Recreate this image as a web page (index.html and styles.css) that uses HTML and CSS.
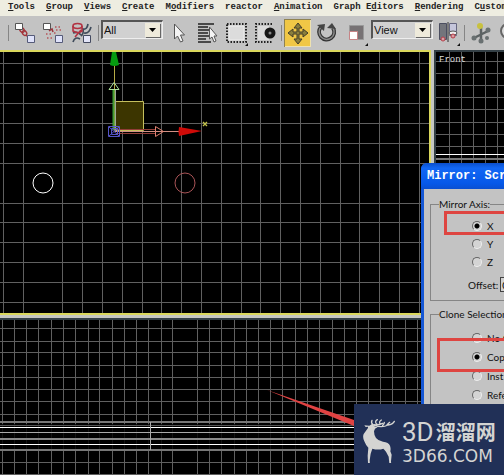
FILE: index.html
```
<!DOCTYPE html>
<html lang="en">
<head>
<meta charset="utf-8">
<title>Mirror tool</title>
<link rel="stylesheet" href="styles.css">
</head>
<body>
<div class="app">
  <nav class="menu">
    <a href="#"><u>T</u>ools</a><a href="#"><u>G</u>roup</a><a href="#"><u>V</u>iews</a><a href="#"><u>C</u>reate</a><a href="#">M<u>o</u>difiers</a><a href="#">reactor</a><a href="#"><u>A</u>nimation</a><a href="#">Graph E<u>d</u>itors</a><a href="#"><u>R</u>endering</a><a href="#">C<u>u</u>stom</a>
  </nav>

  <div class="toolbar">
    <span class="sep"></span>
    <button class="tool" aria-label="Link"><svg width="27" height="28" viewBox="0 0 27 28">
      <g fill="none" stroke="#a3343b" stroke-width="1.3"><ellipse cx="11" cy="11" rx="2" ry="2.6" transform="rotate(-40 11 11)"/><ellipse cx="13.500" cy="14" rx="2" ry="2.600" transform="rotate(-40 13.500 14)"/><path d="M15 16l2 2"/></g>
      <path fill="#fff" stroke="#555" d="M4.500 4.500h7v6h-7z"/><path fill="#dfe2fa" stroke="#555a78" d="M16.500 16.500h7v7h-7z"/></svg></button>
    <button class="tool" aria-label="Unlink"><svg width="27" height="28" viewBox="0 0 27 28">
      <path fill="#fff" stroke="#555" d="M3.500 4.500h7v6h-7z"/><path fill="#dfe2fa" stroke="#555a78" d="M15.500 16.500h7v7h-7z"/>
      <path fill="none" stroke="#9b343b" stroke-width="1.500" d="M9 12l3-2 1 3"/>
      <path stroke="#b5565b" stroke-width="1.500" stroke-dasharray="1.500 2" d="M15 8h5M16 11h5M6 15h6M7 19h5M14 14h2"/></svg></button>
    <button class="tool" aria-label="Bind to space warp"><svg width="27" height="28" viewBox="0 0 27 28">
      <g fill="none" stroke="#3f4b5b" stroke-width="1.700"><path d="M4 14q5-2 8 2M4 23q2-6 7-3M12 17q3-2 2-7q4 1 5-5M15 14q5 1 7-6"/></g>
      <g fill="none" stroke="#b23343" stroke-width="1.600"><ellipse cx="8.500" cy="7" rx="4.500" ry="2.500"/><path d="M4 7v5q5 3 9 0V7M12 11l-6 7"/></g>
      <path fill="#e3e5f8" stroke="#444a60" d="M14.500 16.500h7v7h-7z"/></svg></button>
    <span class="sep"></span>
    <span class="combo"><select aria-label="Selection filter"><option>All</option></select><svg width="15" height="14" viewBox="0 0 15 14"><path d="M4 5h7l-3.500 4z"/></svg></span>
    <button class="tool" aria-label="Select"><svg width="27" height="28" viewBox="0 0 27 28"><path fill="#f4f4f4" stroke="#555" d="M9.500 5v15l3-3 3 6 2.500-1-2.500-6h4z"/></svg></button>
    <button class="tool" aria-label="Select by name"><svg width="27" height="28" viewBox="0 0 27 28">
      <path stroke="#222" stroke-width="1.500" d="M4 5h16M4 8h10M4 11h14M4 14h10M4 17h11M4 20h8M4 23h13"/>
      <path fill="#f4f4f4" stroke="#555" d="M15.500 8v12l2.500-2 2 5 2-1-2-5h3z"/></svg></button>
    <button class="tool" aria-label="Rectangular selection"><svg width="27" height="28" viewBox="0 0 27 28">
      <path fill="#dcdcdc" stroke="#eee" d="M6 7h15v14H6z"/><path fill="none" stroke="#222" stroke-width="2" stroke-dasharray="1.500 1.500" d="M4 5h19v18H4z"/><path fill="#111" d="M25 24v3h-3z"/></svg></button>
    <button class="tool" aria-label="Window crossing"><svg width="27" height="28" viewBox="0 0 27 28">
      <path fill="#dcdcdc" d="M6 7h11v14H6z"/><path fill="none" stroke="#222" stroke-width="2" stroke-dasharray="1.500 1.500" d="M20 5H4v18h16"/><circle cx="18" cy="14" r="5.500" fill="#171717"/><circle cx="18" cy="14" r="1.500" fill="#888"/></svg></button>
    <span class="sep"></span>
    <button class="tool tool-on" aria-label="Move"><svg width="27" height="28" viewBox="0 0 27 28">
      <path fill="#8b7f3c" stroke="#423c28" d="M14 4l4 5h-3v4h4v-3l5 4-5 4v-3h-4v5h3l-4 5-4-5h3v-5H9v3l-5-4 5-4v3h4V9h-3z"/></svg></button>
    <button class="tool" aria-label="Rotate"><svg width="27" height="28" viewBox="0 0 27 28">
      <path fill="none" stroke="#333" stroke-width="4" d="M8 8a7.500 7.500 0 1 0 12 1"/><path fill="none" stroke="#8a8a8a" stroke-width="1.500" d="M8 8a7.500 7.500 0 1 0 12 1"/><path fill="#444" d="M4 6l8-1-1 7zM14 9l5-5 4 6z"/></svg></button>
    <button class="tool" aria-label="Scale"><svg width="27" height="28" viewBox="0 0 27 28">
      <path fill="#777274" stroke="#999" d="M7.500 6.500h14v14h-14z"/><path fill="#fff" stroke="#c78486" d="M7.500 12.500h8v8h-8z"/><path fill="#111" d="M26 24v3h-3z"/></svg></button>
    <span class="combo"><select aria-label="Reference coordinate system"><option>View</option></select><svg width="15" height="14" viewBox="0 0 15 14"><path d="M4 5h7l-3.500 4z"/></svg></span>
    <button class="tool" aria-label="Mirror"><svg width="27" height="28" viewBox="0 0 27 28">
      <path fill="#73757c" stroke="#4b4e60" d="M4.500 4.500h7v16h-7z"/><path fill="#c5c6db" stroke="#65667f" d="M14.500 4.500h7v12h-7z"/>
      <path stroke="#333" d="M13 3v20"/><ellipse cx="18" cy="14" rx="4" ry="2" fill="#eee" stroke="#555"/>
      <g fill="#d9a0a4" stroke="#b63d48"><circle cx="8" cy="20" r="2"/><circle cx="18" cy="17" r="2"/></g><path fill="#111" d="M25 24v3h-3z"/></svg></button>
    <span class="sep"></span>
    <button class="tool" aria-label="Align"><svg width="27" height="28" viewBox="0 0 27 28">
      <path fill="none" stroke="#5c6263" stroke-width="2.500" d="M14 7v15M7 19l14-7"/><g fill="#697071"><circle cx="7" cy="19" r="2.500"/><circle cx="21" cy="11" r="2.500"/><circle cx="14" cy="22" r="2.500"/><circle cx="20" cy="19" r="2"/></g><circle cx="13" cy="7" r="3" fill="#c8c13f"/></svg></button>
    <button class="tool" aria-label="Layers"><svg width="27" height="28" viewBox="0 0 27 28"><circle cx="12" cy="12" r="7" fill="#ddd" stroke="#666" stroke-width="2"/></svg></button>
  </div>

  <main class="views">
    <section class="view view-active">
      <svg class="scene" aria-label="Top viewport">
        <g transform="translate(0 -52)">
          <path class="grid" d="M3.500 0v500M23.500 0v500M62.500 0v500M82.500 0v500M102.500 0v500M122.500 0v500M142.500 0v500M161.500 0v500M181.500 0v500M201.500 0v500M221.500 0v500M241.500 0v500M260.500 0v500M280.500 0v500M300.500 0v500M320.500 0v500M340.500 0v500M359.500 0v500M379.500 0v500M399.500 0v500M419.500 0v500
          M0 63.500h900M0 83.500h900M0 103.500h900M0 123.500h900M0 143.500h900M0 163.500h900M0 203.500h900M0 222.500h900M0 242.500h900M0 262.500h900M0 282.500h900M0 302.500h900"/>
          <circle cx="43" cy="183" r="10" fill="none" stroke="#fff"/>
          <circle cx="185" cy="183" r="10" fill="none" stroke="#a95457"/>
          <path fill="#3c3500" stroke="#c5bf5d" d="M114.500 101.500h29v29h-29z"/>
          <path stroke="#b6aa46" d="M114.500 65v65"/>
          <path stroke="#3e9b35" stroke-width="2" d="M113.500 90v40"/><path stroke="#9a9" d="M115.500 90v40"/>
          <path fill="none" stroke="#aee29b" d="M109 89.500h10l-5-7z"/>
          <path fill="#069b10" d="M112 52h4l3 13q-5 2-9 0z"/>
          <path stroke="#d29084" d="M115 131.500h65"/><path stroke="#913d37" d="M116 129.500h40M116 133.500h40"/>
          <path fill="none" stroke="#df8070" d="M155.500 126.500v10l8-5z"/>
          <path fill="#d00b08" d="M179 127q-1 5 0 9l23-5z"/>
          <path fill="none" stroke="#5555c7" d="M108.500 126.500h11v10h-11zM109 127l10 9M119 127l-10 9M111.500 128.500h6v6h-6z"/>
          <path stroke="#c2c24b" stroke-width="1.300" d="M203 122l4 4M207 122l-4 4"/>
        </g>
      </svg>
    </section>
    <section class="view">
      <span class="view-name">Front</span>
      <svg class="scene" aria-label="Front viewport">
        <g transform="translate(-436 -52)">
          <path class="grid" d="M449.500 0v500M461.500 0v500M473.500 0v500M485.500 0v500M497.500 0v500M436 61.500h500M436 73.500h500M436 85.500h500M436 97.500h500M436 109.500h500M436 122.500h500M436 134.500h500M436 146.500h500"/>
          <path stroke="#fff" d="M436 154.500h500"/><path stroke="#777" stroke-width="2" d="M436 159h500"/>
        </g>
      </svg>
    </section>
    <section class="view">
      <svg class="scene" aria-label="Left viewport">
        <g transform="translate(0 -320)">
          <path class="grid" d="M2.500 0v500M14.500 0v500M26.500 0v500M38.500 0v500M51.500 0v500M63.500 0v500M75.500 0v500M88.500 0v500M99.500 0v500M112.500 0v500M124.500 0v500M136.500 0v500M148.500 0v500M161.500 0v500M172.500 0v500M197.500 0v500M209.500 0v500M221.500 0v500M234.500 0v500M246.500 0v500M258.500 0v500M270.500 0v500M282.500 0v500M295.500 0v500M307.500 0v500M319.500 0v500M332.500 0v500M344.500 0v500M356.500 0v500M368.500 0v500M380.500 0v500M392.500 0v500M405.500 0v500M417.500 0v500
          M0 328.500h900M0 341.500h900M0 352.500h900M0 365.500h900M0 377.500h900M0 389.500h900M0 401.500h900M0 414.500h900M0 462.500h900M0 474.500h900"/>
          <path fill="#000" d="M0 424h900v25H0z" opacity=".8"/>
          <path stroke="#777" stroke-width="2" d="M0 422h900M0 450h900"/>
          <path stroke="#555" d="M0 425.500h900"/>
          <path stroke="#aaa" d="M0 432.500h900"/><path stroke="#888" stroke-width="2" d="M0 439h900"/>
          <path stroke="#fff" d="M0 427.500h900M0 444.500h900"/>
          <path stroke="#aaa" d="M150.500 422v28"/>
          <path fill="#e04343" d="M267 390l87 30 30 10v7l-30-11z"/>
        </g>
      </svg>
    </section>
    <section class="view"></section>
  </main>

  <form class="dialog">
    <h1>Mirror: Scr</h1>
    <div class="dialog-body">
      <fieldset class="axis">
        <legend>Mirror Axis:</legend>
        <label><input type="radio" name="axis" checked>X</label>
        <label><input type="radio" name="axis">Y</label>
        <label><input type="radio" name="axis">Z</label>
        <label class="offset">Offset:<input type="text" value="0"></label>
      </fieldset>
      <fieldset class="clone">
        <legend>Clone Selection</legend>
        <label><input type="radio" name="clone">No C</label>
        <label><input type="radio" name="clone" checked>Cop</label>
        <label><input type="radio" name="clone">Inst</label>
        <label><input type="radio" name="clone">Refe</label>
      </fieldset>
    </div>
    <span class="mark mark-axis"></span>
    <span class="mark mark-clone"></span>
  </form>

  <aside class="brand">
    <svg width="34" height="45" viewBox="55 112 102 135">
      <path fill="#d4d4d2" d="M62 134l15 1 9-6 8 9 8 2-8 4-3 8q0 12 6 20 7 9 21 11 17 2 21 12 3 8 1 17l4 10-2 20 1 12h-8l-1-4 3-2-2-20-8-15q-6-8-8-9-15 5-33 0l-5 15-3 20 1 14h-8l-1-4 3-2-1-22 2-24q-8-8-12-19-6-12-2-22l13-18v-4l-7 1z"/>
      <path fill="none" stroke="#d4d4d2" stroke-width="4" stroke-linecap="round" d="M88 132q-7-6-3-13M91 132q13 2 26-4M100 131q-9-8 1-14M110 130q-6-6 3-12M91 134q25 8 42-1 14-2 19-11M117 134q5-3 5-9M130 132l8-7"/>
    </svg>
    <div class="brand-text">
      <div class="brand-name"><span class="brand-3d">3D</span><span>溜溜网</span></div>
      <div class="brand-site">3D66.COM</div>
    </div>
  </aside>
</div>
</body>
</html>
```
FILE: styles.css
```
* { box-sizing: border-box; }

body {
  margin: 0;
  overflow: hidden;
  font-family: Lato, "Liberation Sans", sans-serif;
  font-size: 10px;
  color: #111;
}

.app {
  position: relative;
  display: flex;
  flex-direction: column;
  height: 100vh;
  overflow: hidden;
  background: #c3c3c3;
}

.menu {
  display: flex;
  gap: 11px;
  padding: 0 8px;
  background: #eeede1;
  font: bold 9px/14px "Liberation Mono", monospace;
  padding-bottom: 2px;
  white-space: nowrap;
}

.menu a { color: #222; text-decoration: none; }

.toolbar {
  display: flex;
  align-items: center;
  gap: 2px;
  height: 34px;
  padding: 0 8px;
  background: #c3c3c3;
}

.toolbar > * { flex: none; }

.sep { width: 1px; height: 16px; background: #858585; }

.tool {
  display: block;
  width: 27px;
  height: 28px;
  padding: 0;
  border: 0;
  background: none;
}

.tool svg { display: block; }
.tool-on { background: #f0c746; box-shadow: inset 1px 1px #8f8250, inset -1px -1px #eee2b0; }

.combo {
  display: flex;
  align-items: center;
  width: 62px;
  height: 19px;
  margin-bottom: 8px;
  padding-right: 2px;
  border: 1px solid #eee;
  border-top: 2px solid #555;
  border-left: 2px solid #555;
  background: #d1d1d1;
}

.combo select {
  flex: 1;
  min-width: 0;
  padding: 0 0 0 1px;
  border: 0;
  appearance: none;
  background: none;
  color: #111;
  font: 11px/14px "Liberation Sans", sans-serif;
}

.combo svg {
  flex: none;
  background: #eeeadb;
  box-shadow: 1px 1px #666;
}

.views {
  flex: 1;
  min-height: 0;
  display: grid;
  grid-template-columns: 431fr 70fr;
  grid-template-rows: 265fr 157fr;
  gap: 3px;
  background: #c6c7c2;
}

.view {
  position: relative;
  min-width: 0;
  min-height: 0;
  overflow: hidden;
  border: 2px solid #344046;
  border-right: 0;
  border-bottom: 0;
  background: #000;
}

.view:nth-child(odd) { border-left: 0; }
.view-active { border: 2px solid #dad75c; }

.scene { display: block; width: 100%; height: 100%; }
.grid { fill: none; stroke: #606060; }

.view-name {
  position: absolute;
  top: 2px;
  left: 3px;
  color: #ddd;
  font: 9px/12px "Liberation Mono", monospace;
}

.dialog {
  position: absolute;
  top: 163px;
  left: 421px;
  width: 220px;
  height: 300px;
  border: 3px solid #1557d5;
  border-top: 0;
  border-radius: 6px 6px 0 0;
  background: #c3c3c3;
}

.dialog h1 {
  margin: 0 -3px;
  padding-left: 6px;
  border-radius: 6px 6px 0 0;
  background: linear-gradient(#0b4fcb, #1267f4 20%, #0658e8 80%, #0a4fd0);
  color: #fff;
  font: bold 12px/26px "Liberation Mono", monospace;
  white-space: nowrap;
}

.dialog-body {
  display: grid;
  gap: 6px;
  padding: 8px 6px;
}

fieldset {
  display: flex;
  flex-direction: column;
  min-width: 0;
  margin: 0;
  padding: 0 8px;
  border: 1px solid #858585;
}

legend { padding: 0; line-height: 14px; }

fieldset label {
  display: flex;
  align-items: center;
  gap: 5px;
  height: 18px;
  padding-left: 33px;
}

.axis { padding-top: 6px; padding-bottom: 6px; }
.clone { padding-top: 7px; }
.clone label { height: 19px; }

fieldset .offset { gap: 2px; height: 19px; margin-top: 4px; padding-left: 29px; }

input[type="radio"] {
  width: 10px;
  height: 10px;
  margin: 0;
  border: 1px solid;
  border-color: #666 #eee #eee #666;
  border-radius: 50%;
  appearance: none;
  background: #d4d4d4;
}

input[type="radio"]:checked { background: radial-gradient(circle, #000 2px, #d4d4d4 3px); }

input[type="text"] {
  width: 50px;
  height: 15px;
  padding: 0 1px;
  border: 1px solid #444;
  background: #d1d1d1;
  font: inherit;
}

.mark {
  position: absolute;
  right: 20px;
  border: 3px solid #de4541;
}

.mark-axis { top: 48px; left: 20px; height: 24px; }
.mark-clone { top: 175px; left: 13px; height: 34px; }

.brand {
  position: absolute;
  right: 0;
  bottom: 0;
  display: flex;
  gap: 6px;
  width: 150px;
  height: 71px;
  padding: 14px 8px 0;
  background: #213057;
  color: #d4d4d2;
}

.brand svg { flex: none; }
.brand-text { white-space: nowrap; }

.brand-name {
  display: flex;
  gap: 2px;
  font: bold 20px/28px "Noto Sans CJK SC", sans-serif;
}

.brand-3d { font: 26px/28px Roboto, "Liberation Sans", sans-serif; }
.brand-site { font: 17px/20px "DejaVu Sans", sans-serif; }
```
